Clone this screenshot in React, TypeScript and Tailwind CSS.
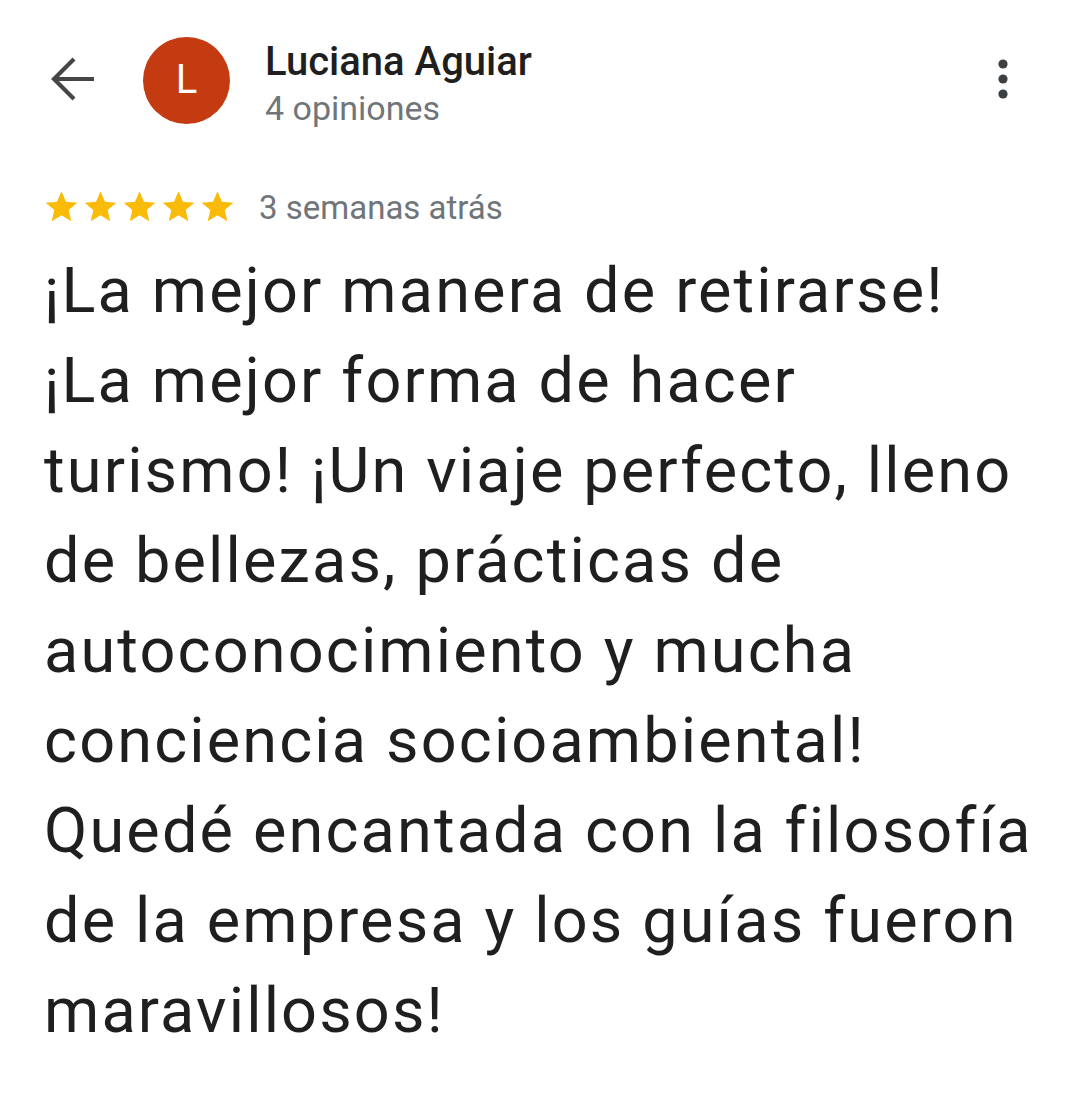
const lines = [
  "¡La mejor manera de retirarse!",
  "¡La mejor forma de hacer",
  "turismo! ¡Un viaje perfecto, lleno",
  "de bellezas, prácticas de",
  "autoconocimiento y mucha",
  "conciencia socioambiental!",
  "Quedé encantada con la filosofía",
  "de la empresa y los guías fueron",
  "maravillosos!",
];

const Star = () => (
  <svg width="39" height="38" viewBox="0 0 24 24" fill="#f9bb07">
    <path d="M12 17.27 18.18 21l-1.64-7.03L22 9.24l-7.19-.61L12 2 9.19 8.63 2 9.24l5.46 4.73L5.82 21z" />
  </svg>
);

export default function App() {
  return (
    <div className="w-[1080px] h-[1094px] bg-white overflow-hidden font-['Roboto',sans-serif]">
      {/* header */}
      <div className="flex items-center h-[160px] pl-[50px] pr-[72px]">
        <svg width="46" height="46" viewBox="0 0 46 46" className="shrink-0 -mt-[2px]">
          <path d="M44 23H5M24 3 4 23l20 20" fill="none" stroke="#444746" strokeWidth="4.2" />
        </svg>
        <div className="ml-[47px] w-[87px] h-[87px] rounded-full bg-[#c43b12] flex items-center justify-center shrink-0">
          <span className="text-white text-[40px] leading-none font-normal">L</span>
        </div>
        <div className="ml-[35px] flex flex-col mt-[8px]">
          <span className="text-[40px] leading-[48px] text-[#1f1f1f] font-medium">Luciana Aguiar</span>
          <span className="text-[34px] leading-[44px] text-[#70757a]">4 opiniones</span>
        </div>
        <svg width="10" height="40" viewBox="0 0 10 40" className="ml-auto shrink-0 -mt-[3px]" fill="#3c4043">
          <circle cx="5" cy="5" r="4.6" />
          <circle cx="5" cy="20" r="4.6" />
          <circle cx="5" cy="35" r="4.6" />
        </svg>
      </div>

      {/* rating */}
      <div className="flex items-center pl-[42px] mt-[28px] h-[38px]">
        <div className="flex">
          <Star />
          <Star />
          <Star />
          <Star />
          <Star />
        </div>
        <span className="ml-[22px] text-[33px] text-[#70757a] leading-none">3 semanas atrás</span>
      </div>

      {/* body */}
      <div className="pl-[44px] pt-[20px] text-[63px] leading-[90px] text-[#1f1f1f] tracking-[2.15px]">
        {lines.map((l) => (
          <span key={l} className="block whitespace-nowrap">
            {l}
          </span>
        ))}
      </div>
    </div>
  );
}
